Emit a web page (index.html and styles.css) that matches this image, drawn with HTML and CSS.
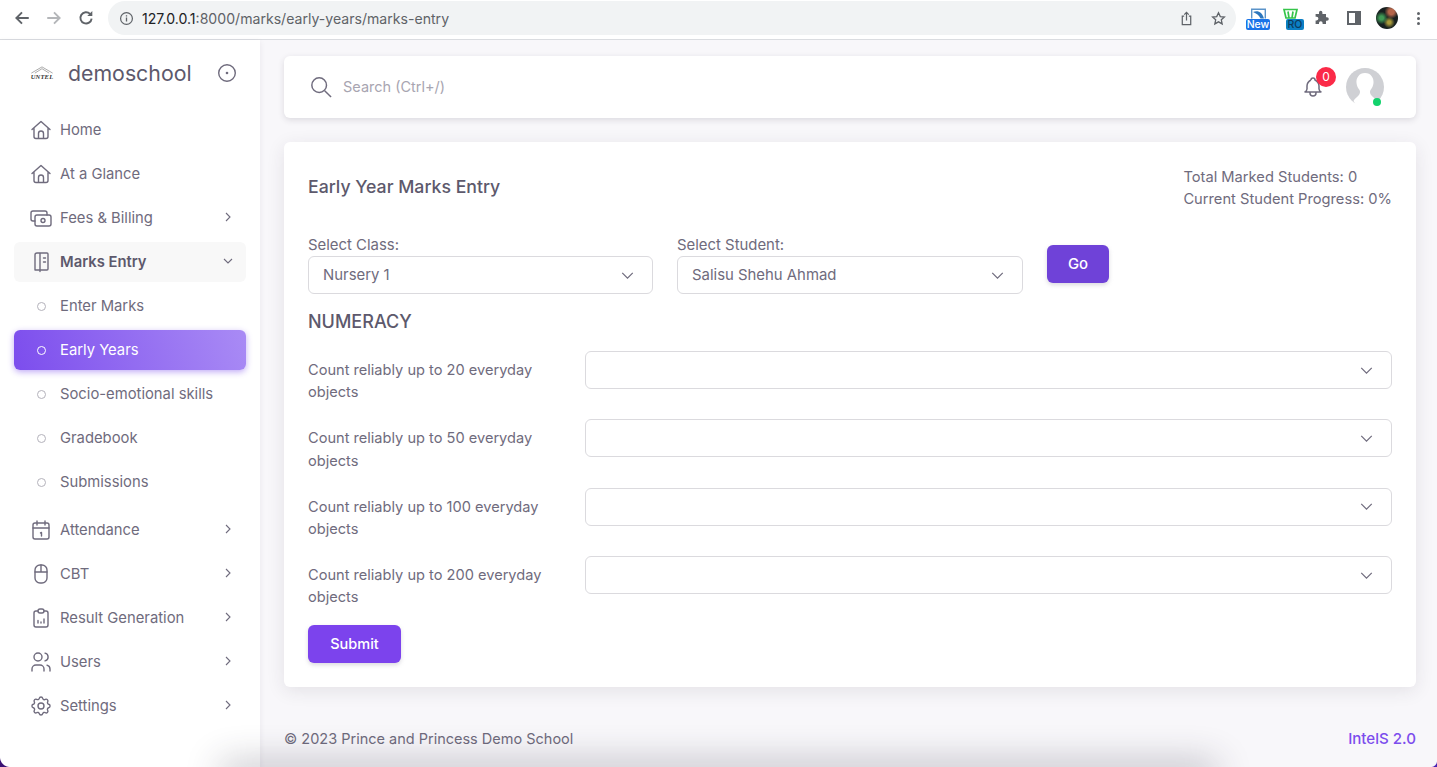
FILE: index.html
```html
<!DOCTYPE html>
<html lang="en">
<head>
  <meta charset="UTF-8">
  <title>Early Year Marks Entry</title>
  <link rel="stylesheet" href="styles.css">
</head>
<body>
  <!-- browser toolbar -->
  <div class="chrome">
    <svg class="chrome-btn" viewBox="0 0 16 16"><path d="M14 8H3M8 3 3 8l5 5" fill="none" stroke="#5f6368" stroke-width="1.7"/></svg>
    <svg class="chrome-btn" viewBox="0 0 16 16"><path d="M2 8h11M8 3l5 5-5 5" fill="none" stroke="#b4b6b9" stroke-width="1.7"/></svg>
    <svg class="chrome-btn" viewBox="0 0 16 16"><path d="M13 8.500A5 5 0 1 1 11.600 4.400" fill="none" stroke="#5f6368" stroke-width="1.700"/><path d="M13.600 1.800v4.500H9.100z" fill="#5f6368"/></svg>
    <div class="omnibox">
      <svg class="omni-info" viewBox="0 0 16 16"><circle cx="8" cy="8" r="6.300" fill="none" stroke="#5f6368" stroke-width="1.300"/><path d="M8 7v4.200M8 4.600v1.300" stroke="#5f6368" stroke-width="1.400"/></svg>
      <span class="url"><b>127.0.0.1</b>:8000/marks/early-years/marks-entry</span>
      <svg class="omni-icon" viewBox="0 0 16 16"><path d="M5.500 5.500H3.500v9h9v-9h-2M8 10V1.500M5.600 3.800 8 1.400l2.400 2.400" fill="none" stroke="#5f6368" stroke-width="1.300"/></svg>
      <svg class="omni-icon star" viewBox="0 0 16 16"><path d="m8 1.800 1.900 4.100 4.400.5-3.300 3 .9 4.400L8 11.600l-3.900 2.200.9-4.400-3.300-3 4.400-.5z" fill="none" stroke="#5f6368" stroke-width="1.400"/></svg>
    </div>
    <div class="ext">
      <svg class="ext-top" viewBox="0 0 15 10"><path d="M.7 10V.7h13.600V10" fill="none" stroke="#5b93c9" stroke-width="1.400"/><path d="M2 3.500c5-2 9 0 11 6.500H9.500C8 6.500 5.500 5 2 3.500z" fill="#2c76bd"/></svg>
      <span class="ext-tag ext-new">New</span>
    </div>
    <div class="ext ext-ro">
      <svg class="ext-top" viewBox="0 0 15 10"><path d="M1 1h13l-2 8.500H3zM5 3l1 6.500M10 3 9 9.500" fill="none" stroke="#35c44a" stroke-width="1.700"/></svg>
      <span class="ext-tag ext-blue">RO</span>
    </div>
    <svg class="puzzle" viewBox="0 0 16 16"><path d="M6 2.500a1.700 1.700 0 0 1 3.400 0V4h3.600v3.200h1a1.800 1.800 0 0 1 0 3.600h-1V14H9.600v-1a1.800 1.800 0 0 0-3.600 0v1H2.600v-3.600h1a1.800 1.800 0 0 0 0-3.600h-1V4H6z" fill="#5f6368"/></svg>
    <div class="side-toggle"></div>
    <div class="chrome-avatar"></div>
    <div class="kebab"><i></i><i></i><i></i></div>
  </div>

  <div class="app">
    <aside class="sidebar">
      <div class="brand">
        <div class="logo">
          <svg viewBox="0 0 26 9"><path d="M1 8 13 1l12 7M5 8l8-5 8 5" fill="none" stroke="#8a8a8a" stroke-width=".8"/></svg>
          <span>UNTEL</span>
        </div>
        <span class="brand-name">demoschool</span>
        <svg class="brand-toggle" viewBox="0 0 20 20"><circle cx="10" cy="10" r="8.300" fill="none" stroke="#6f6b7d" stroke-width="1.400"/><circle cx="10" cy="10" r="1.300" fill="#6f6b7d"/></svg>
      </div>

      <nav class="menu">
        <a class="menu-item">
          <svg class="menu-icon" viewBox="0 0 24 24"><path d="M3 11.500 12 3.500l9 8M5 10v8.500a2 2 0 0 0 2 2h10a2 2 0 0 0 2-2V10M9.500 20.500v-5a2.500 2.500 0 0 1 5 0v5"/></svg>
          <span>Home</span>
        </a>
        <a class="menu-item">
          <svg class="menu-icon" viewBox="0 0 24 24"><path d="M3 11.500 12 3.500l9 8M5 10v8.500a2 2 0 0 0 2 2h10a2 2 0 0 0 2-2V10M9.500 20.500v-5a2.500 2.500 0 0 1 5 0v5"/></svg>
          <span>At a Glance</span>
        </a>
        <a class="menu-item">
          <svg class="menu-icon" viewBox="0 0 24 24"><rect x="6" y="9" width="16" height="11" rx="2"/><circle cx="14" cy="14.500" r="2"/><path d="M18 9V7a2 2 0 0 0-2-2H4a2 2 0 0 0-2 2v6a2 2 0 0 0 2 2h2"/></svg>
          <span>Fees &amp; Billing</span>
          <svg class="caret" viewBox="0 0 12 12"><path d="m4 2 4 4-4 4"/></svg>
        </a>
        <a class="menu-item open">
          <svg class="menu-icon" viewBox="0 0 24 24"><path d="M6 5a2 2 0 0 1 2-2h10a1 1 0 0 1 1 1v15a1 1 0 0 1-1 1h-7v1.500M6 5v15h5M11 3v17M14.500 8h2M14.500 12h2"/></svg>
          <span>Marks Entry</span>
          <svg class="caret" viewBox="0 0 12 12"><path d="m2 4 4 4 4-4"/></svg>
        </a>
        <a class="menu-item sub"><i class="dot"></i><span>Enter Marks</span></a>
        <a class="menu-item sub active"><i class="dot"></i><span>Early Years</span></a>
        <a class="menu-item sub"><i class="dot"></i><span>Socio-emotional skills</span></a>
        <a class="menu-item sub"><i class="dot"></i><span>Gradebook</span></a>
        <a class="menu-item sub last"><i class="dot"></i><span>Submissions</span></a>
        <a class="menu-item">
          <svg class="menu-icon" viewBox="0 0 24 24"><rect x="4" y="5" width="16" height="16" rx="2"/><path d="M8 3v4M16 3v4M4 10h16M11.500 15l1-.5V18"/></svg>
          <span>Attendance</span>
          <svg class="caret" viewBox="0 0 12 12"><path d="m4 2 4 4-4 4"/></svg>
        </a>
        <a class="menu-item">
          <svg class="menu-icon" viewBox="0 0 24 24"><rect x="6" y="3" width="12" height="18" rx="5"/><path d="M6 10h12M12 3v7"/></svg>
          <span>CBT</span>
          <svg class="caret" viewBox="0 0 12 12"><path d="m4 2 4 4-4 4"/></svg>
        </a>
        <a class="menu-item">
          <svg class="menu-icon" viewBox="0 0 24 24"><path d="M9 5H7a2 2 0 0 0-2 2v12a2 2 0 0 0 2 2h10a2 2 0 0 0 2-2V7a2 2 0 0 0-2-2h-2"/><rect x="9" y="3" width="6" height="4" rx="2"/><path d="M9 17v-2.500M12 17v-1M15 17v-4"/></svg>
          <span>Result Generation</span>
          <svg class="caret" viewBox="0 0 12 12"><path d="m4 2 4 4-4 4"/></svg>
        </a>
        <a class="menu-item">
          <svg class="menu-icon" viewBox="0 0 24 24"><circle cx="9" cy="7" r="4"/><path d="M3 21v-2a4 4 0 0 1 4-4h4a4 4 0 0 1 4 4v2M16 3.100a4 4 0 0 1 0 7.800M21 21v-2a4 4 0 0 0-3-3.900"/></svg>
          <span>Users</span>
          <svg class="caret" viewBox="0 0 12 12"><path d="m4 2 4 4-4 4"/></svg>
        </a>
        <a class="menu-item">
          <svg class="menu-icon" viewBox="0 0 24 24"><path d="M10.300 4.300c.4-1.800 3-1.800 3.400 0a1.700 1.700 0 0 0 2.600 1.100c1.500-.9 3.300.8 2.400 2.400a1.700 1.700 0 0 0 1 2.500c1.800.4 1.800 3 0 3.400a1.700 1.700 0 0 0-1 2.600c.9 1.500-.9 3.300-2.400 2.400a1.700 1.700 0 0 0-2.600 1c-.4 1.800-3 1.800-3.400 0a1.700 1.700 0 0 0-2.600-1c-1.500.9-3.300-.9-2.400-2.400a1.700 1.700 0 0 0-1-2.600c-1.800-.4-1.800-3 0-3.400a1.700 1.700 0 0 0 1-2.500c-.9-1.600.9-3.300 2.400-2.400 1 .6 2.300.1 2.600-1.100z"/><circle cx="12" cy="12" r="3"/></svg>
          <span>Settings</span>
          <svg class="caret" viewBox="0 0 12 12"><path d="m4 2 4 4-4 4"/></svg>
        </a>
      </nav>
    </aside>

    <main class="content">
      <header class="topbar">
        <svg class="search-icon" viewBox="0 0 24 24"><circle cx="10" cy="10" r="8"/><path d="m16 16 7 7"/></svg>
        <span class="search-text">Search (Ctrl+/)</span>
        <div class="bell">
          <svg viewBox="0 0 24 24"><path d="M10 5a2 2 0 1 1 4 0 7 7 0 0 1 4 6v3a4 4 0 0 0 2 3H4a4 4 0 0 0 2-3v-3a7 7 0 0 1 4-6M9 17v1a3 3 0 0 0 6 0v-1"/></svg>
          <span class="badge">0</span>
        </div>
        <div class="avatar">
          <svg viewBox="0 0 38 38"><circle cx="19" cy="19" r="19" fill="#cfd0d4"/><path d="M19 5c-6 0-9 5-8.500 10 .3 3 1.500 5 3 7 1 1.500.5 4-1 5.500-2 2-4 3.500-5 5.500l3 5h17l3-5c-1-2-3-3.500-5-5.500-1.500-1.500-2-4-1-5.500 1.500-2 2.700-4 3-7C28 10 25 5 19 5z" fill="#fff"/></svg>
          <i class="online"></i>
        </div>
      </header>

      <section class="card">
        <div class="card-head">
          <h2>Early Year Marks Entry</h2>
          <div class="stats">
            <div>Total Marked Students: 0</div>
            <div>Current Student Progress: 0%</div>
          </div>
        </div>

        <div class="filters">
          <div class="filter">
            <label>Select Class:</label>
            <div class="select"><span>Nursery 1</span><svg class="chev" viewBox="0 0 14 8"><path d="m1 1 6 6 6-6"/></svg></div>
          </div>
          <div class="filter">
            <label>Select Student:</label>
            <div class="select"><span>Salisu Shehu Ahmad</span><svg class="chev" viewBox="0 0 14 8"><path d="m1 1 6 6 6-6"/></svg></div>
          </div>
          <button class="btn btn-go">Go</button>
        </div>

        <h3>NUMERACY</h3>

        <div class="row">
          <label>Count reliably up to 20 everyday objects</label>
          <div class="select"><svg class="chev" viewBox="0 0 14 8"><path d="m1 1 6 6 6-6"/></svg></div>
        </div>
        <div class="row">
          <label>Count reliably up to 50 everyday objects</label>
          <div class="select"><svg class="chev" viewBox="0 0 14 8"><path d="m1 1 6 6 6-6"/></svg></div>
        </div>
        <div class="row">
          <label>Count reliably up to 100 everyday objects</label>
          <div class="select"><svg class="chev" viewBox="0 0 14 8"><path d="m1 1 6 6 6-6"/></svg></div>
        </div>
        <div class="row">
          <label>Count reliably up to 200 everyday objects</label>
          <div class="select"><svg class="chev" viewBox="0 0 14 8"><path d="m1 1 6 6 6-6"/></svg></div>
        </div>

        <button class="btn btn-submit">Submit</button>
      </section>

      <footer class="footer">
        <span>© 2023 Prince and Princess Demo School</span>
        <span class="version">IntelS 2.0</span>
      </footer>
    </main>
  </div>

  <!-- things lying over the page at the bottom edge of the window -->
  <div class="dock-shadow"></div>
  <div class="corner corner-left"></div>
  <div class="corner corner-right"></div>
</body>
</html>
```

FILE: styles.css
```css
html, body {
  margin: 0;
  height: 767px;
  overflow: hidden;
}
body {
  font-family: "Inter", "Liberation Sans", sans-serif;
  font-size: 14.5px;
  color: #6f6b7d;
  background: #f8f7fa;
}

/* browser toolbar */
.chrome {
  height: 36px;
  padding: 0 0 3px 13px;
  background: #fff;
  border-bottom: 1px solid #dadce0;
  display: flex;
  align-items: center;
}
.chrome-btn {
  width: 18px;
  height: 18px;
  margin-right: 14px;
}
.omnibox {
  width: 1128px;
  height: 34px;
  margin-left: -1px;
  border-radius: 17px;
  background: #f1f3f4;
  display: flex;
  align-items: center;
  padding-left: 11px;
  padding-right: 10px;
  box-sizing: border-box;
}
.omni-info {
  width: 15px;
  height: 15px;
  margin-right: 8px;
}
.url {
  flex: 1;
  font-size: 14.1px;
  color: #5f6368;
}
.url b {
  font-weight: 400;
  color: #202124;
}
.omni-icon {
  width: 15px;
  height: 15px;
}
.star {
  margin-left: 17px;
}
.ext {
  width: 24px;
  margin-left: 10px;
  display: flex;
  flex-direction: column;
  align-items: center;
  height: 23px;
}
.ext-ro {
  margin-left: 13px;
  align-items: flex-start;
}
.ext-top {
  width: 15px;
  height: 11px;
  margin-top: 1px;
}
.ext-tag {
  width: 24px;
  height: 11px;
  font-size: 10.5px;
  font-weight: 500;
  line-height: 11px;
  text-align: center;
  border-radius: 2px;
}
.ext-new {
  background: #1a73e8;
  color: #fff;
}
.ext-blue {
  width: 18px;
  margin-left: 3px;
  background: #0b7fc4;
  color: #0c3b5e;
}
.puzzle {
  width: 16px;
  height: 16px;
  margin-left: 6px;
}
.side-toggle {
  width: 14px;
  height: 14px;
  margin-left: 18px;
  box-sizing: border-box;
  border: 2px solid #5f6368;
  border-right-width: 6px;
}
.chrome-avatar {
  width: 22px;
  height: 22px;
  margin-left: 15px;
  border-radius: 50%;
  background:
    radial-gradient(circle at 70% 22%, #b4654a 0 12%, transparent 30%),
    radial-gradient(circle at 25% 50%, #3f9a55 0 10%, transparent 32%),
    radial-gradient(circle at 60% 70%, #a89a3a 0 8%, transparent 28%),
    #17201f;
}
.kebab {
  margin-left: 19px;
  display: flex;
  flex-direction: column;
  gap: 2px;
}
.kebab i {
  width: 3px;
  height: 3px;
  border-radius: 50%;
  background: #5f6368;
}

/* page layout */
.app {
  display: flex;
  height: 727px;
}
.sidebar {
  width: 260px;
  flex-shrink: 0;
  background: #fff;
  box-shadow: 0 2px 6px rgba(47, 43, 61, 0.08);
  padding: 0 14px;
  box-sizing: border-box;
}
.brand {
  height: 66px;
  display: flex;
  align-items: center;
  padding: 0 0 0 15px;
}
.logo {
  width: 26px;
  margin-right: 13px;
  display: flex;
  flex-direction: column;
  align-items: center;
}
.logo svg {
  width: 24px;
  height: 8px;
}
.logo span {
  font-family: "Liberation Serif", serif;
  font-size: 6.5px;
  line-height: 6px;
  font-style: italic;
  font-weight: 700;
  color: #333;
  letter-spacing: 0.2px;
}
.brand-name {
  font-size: 21.3px;
  color: #5d596c;
  flex: 1;
}
.brand-toggle {
  width: 20px;
  height: 20px;
  margin-right: 9px;
}

.menu {
  display: flex;
  flex-direction: column;
  gap: 4px;
  margin-top: 4px;
  font-size: 14.8px;
}
.menu-item {
  height: 40px;
  display: flex;
  align-items: center;
  padding: 0 12px 0 18px;
  border-radius: 6px;
  color: #6f6b7d;
}
.menu-item span {
  flex: 1;
}
.menu-icon {
  width: 24px;
  height: 24px;
  margin-right: 7px;
  margin-left: -3px;
  fill: none;
  stroke: #6f6b7d;
  stroke-width: 1.4;
  stroke-linecap: round;
  stroke-linejoin: round;
}
.caret {
  width: 12px;
  height: 12px;
  margin-bottom: 2px;
  fill: none;
  stroke: #6f6b7d;
  stroke-width: 1.1;
}
.menu-item.open {
  background: #f8f8f8;
  color: #5d596c;
  font-weight: 600;
}
.dot {
  width: 7px;
  height: 7px;
  margin: 0 14px 0 5px;
  border: 1.5px solid #b4b2bb;
  border-radius: 50%;
  flex-shrink: 0;
}
.menu-item.active {
  color: #fff;
  background: linear-gradient(72deg, #7c4ded 0%, #a98bf5 100%);
  box-shadow: 0 2px 6px rgba(124, 77, 237, 0.48);
}
.active .dot {
  border-color: #fff;
}
.menu-item.last {
  margin-bottom: 4px;
}

/* main column */
.content {
  flex: 1;
  padding: 16px 21px 0 24px;
  min-width: 0;
}
.topbar {
  height: 62px;
  box-sizing: border-box;
  background: #fff;
  border-radius: 6px;
  box-shadow: 0 2px 6px rgba(47, 43, 61, 0.14);
  display: flex;
  align-items: center;
  padding: 0 32px 0 26px;
}
.search-icon {
  width: 22px;
  height: 22px;
  margin-right: 11px;
  fill: none;
  stroke: #6f6b7d;
  stroke-width: 1.6;
}
.search-text {
  flex: 1;
  margin-bottom: 2px;
  color: #a8a5b1;
}
.bell {
  position: relative;
  width: 24px;
  height: 24px;
  margin-right: 21px;
}
.bell svg {
  width: 24px;
  height: 24px;
  fill: none;
  stroke: #6f6b7d;
  stroke-width: 1.500;
  stroke-linejoin: round;
}
.badge {
  position: absolute;
  top: -8px;
  left: 15px;
  width: 20px;
  height: 20px;
  border-radius: 50%;
  background: #fb2a48;
  color: #fff;
  font-size: 12px;
  line-height: 20px;
  text-align: center;
}
.avatar {
  position: relative;
  width: 38px;
  height: 38px;
}
.avatar svg {
  width: 38px;
  height: 38px;
  display: block;
}
.online {
  position: absolute;
  right: 3px;
  bottom: 0;
  width: 8px;
  height: 8px;
  border-radius: 50%;
  background: #12d26c;
}

.card {
  margin-top: 24px;
  height: 545px;
  box-sizing: border-box;
  background: #fff;
  border-radius: 6px;
  box-shadow: 0 4px 18px rgba(47, 43, 61, 0.1);
  padding: 24px;
}
.card-head {
  height: 44px;
  display: flex;
  justify-content: space-between;
  align-items: center;
  line-height: 22px;
}
.card-head h2 {
  margin: 0 0 2px;
  font-size: 17.7px;
  font-weight: 500;
  color: #5d596c;
  line-height: 32px;
}
.stats {
  font-size: 14.7px;
}
.filters {
  display: flex;
  gap: 24px;
  margin-top: 24px;
  align-items: flex-end;
  font-size: 14.9px;
}
.filter {
  width: 345px;
}
.filter + .filter {
  width: 346px;
}
.filter label {
  display: block;
  line-height: 22px;
}
.select {
  height: 38px;
  box-sizing: border-box;
  border: 1px solid #dbdade;
  border-radius: 6px;
  background: #fff;
  display: flex;
  align-items: center;
  padding: 0 18px 0 14px;
  flex: 1;
}
.chev {
  width: 13px;
  height: 7px;
  margin-left: auto;
  fill: none;
  stroke: #6f6b7d;
  stroke-width: 1.4;
}
.btn {
  height: 38px;
  padding: 0;
  border: none;
  border-radius: 6px;
  background: #7c43ed;
  color: #fff;
  font: inherit;
  font-weight: 500;
  box-shadow: 0 2px 4px rgba(165, 163, 174, 0.4);
}
.btn-go {
  width: 62px;
  margin-bottom: 11px;
  background: #6f42d8;
}
.btn-submit {
  width: 93px;
  display: block;
}
h3 {
  margin: 17px 0 18px;
  font-size: 18px;
  line-height: 22px;
  font-weight: 500;
  color: #5d596c;
}
.row {
  display: flex;
  gap: 24px;
  height: 68.4px;
  font-size: 14.6px;
}
.row label {
  width: 253px;
  padding-top: 8px;
  line-height: 22.2px;
  box-sizing: border-box;
}
.footer {
  margin-top: 41px;
  display: flex;
  justify-content: space-between;
  line-height: 22px;
}
.version {
  font-size: 15.1px;
  color: #7c4ded;
  font-weight: 500;
}

/* overlays on the window's bottom edge */
.dock-shadow {
  position: fixed;
  left: 225px;
  right: 225px;
  bottom: -14px;
  height: 14px;
  box-shadow: 0 0 36px 4px rgba(47, 43, 61, 0.32);
}
.corner {
  position: fixed;
  bottom: 0;
}
.corner-left {
  left: 0;
  width: 10px;
  height: 10px;
  background: radial-gradient(circle at 100% 0, transparent 9.500px, #3b1274 10.500px);
}
.corner-right {
  right: 0;
  width: 6px;
  height: 6px;
  background: radial-gradient(circle at 0 0, transparent 5.500px, #4a22b0 6.500px);
}
```
